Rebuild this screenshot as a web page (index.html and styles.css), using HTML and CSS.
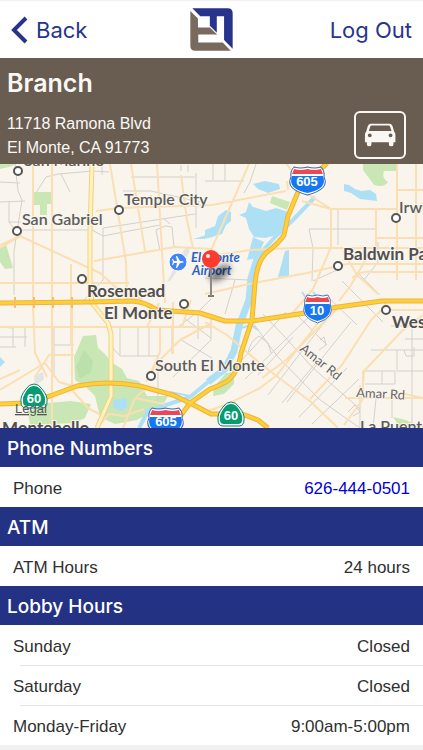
FILE: index.html
```html
<!DOCTYPE html>
<html lang="en">
    <head>
        <meta charset="utf-8">
        <meta name="viewport" content="width=device-width, initial-scale=1">
        <title>Branch</title>
        <link rel="stylesheet" href="styles.css">
    </head>
    <body>
        <header class="topbar">
            <a class="back" href="#">
                <svg class="chevron" viewBox="0 0 17 28" aria-hidden="true"><path d="M15 2 L3 14 L15 26"/></svg>
                Back
            </a>
            <svg class="logo" viewBox="30 23 130 130" role="img" aria-label="Bank logo">
                <path fill="#27348b" d="M37 24H144Q159 24 159 39V146L133 120V48H111V98L90 77V48H61Z"/>
                <path fill="#786b5e" d="M31 32L54 55V82H90L112 103H55V127H129L153 152H46Q31 152 31 137Z"/>
            </svg>
            <a class="logout" href="#">Log Out</a>
        </header>

        <section class="branch">
            <div>
                <h1>Branch</h1>
                <address>11718 Ramona Blvd<br>El Monte, CA 91773</address>
            </div>
            <button class="directions" type="button" aria-label="Directions">
                <svg viewBox="56 54 97 74" aria-hidden="true">
                    <path fill-rule="evenodd" d="M76 56H134Q140 56 143 63L148 80Q152 84 152 90V113H146V120Q146 126 139 126Q132 126 132 120V113H78V120Q78 126 71 126Q64 126 64 120V113H58V90Q58 84 62 80L67 63Q70 56 76 56ZM79 62Q75 62 74 66L70 79H140L136 66Q135 62 131 62ZM73 86A6 6 0 1 0 73 98A6 6 0 1 0 73 86ZM137 86A6 6 0 1 0 137 98A6 6 0 1 0 137 86Z"/>
                </svg>
            </button>
        </section>

        <svg class="map" viewBox="0 164 423 264" role="group" aria-label="Map of El Monte">
            <defs>
                <symbol id="interstate" viewBox="0 0 36 30" preserveAspectRatio="none">
                    <path d="M5 1Q11 3 18 1Q25 3 31 1Q35 5 34 11Q40 23 18 29Q-4 23 2 11Q1 5 5 1Z" fill="#fff" stroke="#3d68ad"/>
                    <path d="M5 3Q11 5 18 3Q25 5 31 3L33 8H3Z" fill="#ed4655"/>
                    <path d="M3 10H33Q38 23 18 27Q-2 23 3 10Z" fill="#1677f3"/>
                </symbol>
                <symbol id="stateroute" viewBox="0 0 28 26">
                    <path d="M14 1Q19 1 22 6Q28 13 27 19Q27 25 22 25H6Q1 25 1 19Q0 13 6 6Q9 1 14 1Z" fill="#fff" stroke="#078663"/>
                    <path d="M14 3Q18 3 21 7Q26 14 25 19Q25 23 21 23H7Q3 23 3 19Q2 14 7 7Q10 3 14 3Z" fill="#079b72"/>
                </symbol>
                <filter id="soft" x="-100%" y="-100%" width="300%" height="300%"><feGaussianBlur stdDeviation="3"/></filter>
            </defs>

            <rect class="land" x="0" y="164" width="423" height="264"/>

            <g class="park">
                <path d="M34 192H52V204H47V215H40V205H34Z"/>
                <path d="M0 248L6 244L13 268L5 269L0 262Z"/>
                <path d="M0 164H17Q8 168 0 169Z"/>
                <path d="M363 164H396V171H384Q381 178 388 182Q384 188 374 185Q369 178 363 170Z"/>
                <path d="M272 196L290 202L287 210L270 203Z"/>
                <path d="M83 336L96 335L98 348L105 354L111 362L122 369L127 378L139 381L147 396L168 396L163 405L137 420L115 424L100 417L95 396L86 387L75 380L74 357Z"/>
                <path d="M47 403L71 401L91 404L85 418L75 423L30 425L28 412Z"/>
                <path d="M214 387L226 373H234L234 384L224 394L213 396Z"/>
                <path d="M393 417L406 420L422 428H400Z"/>
            </g>
            <path class="parkdark" d="M84 350L93 361L91 372L80 379L76 367Z"/>
            <path class="runway" d="M167 282L184 250L190 246L189 253L171 280ZM34 376L43 372L44 379L35 386Z"/>

            <g class="water">
                <path d="M253 184L265 181L279 184L280 189L268 193L258 189Z"/>
                <path d="M344 184L349 185L355 189L361 191L370 190L376 194L377 201L360 199L351 193L344 191Z"/>
                <path d="M249 202L253 207L260 209L266 211L276 208L288 212L283 228L273 236L265 238L254 237L249 229L246 218L239 215L246 212Z"/>
                <path d="M226 210L231 212V221L226 225L222 234L212 237L205 236V230L215 226L218 216Z"/>
                <path d="M193 239L213 233V237L204 239Z"/>
                <path d="M253 237L264 242L257 258L247 260Z"/>
                <path d="M285 251L289 250V276L278 277Z"/>
                <path d="M113 400L126 398L128 407L120 411L114 408Z"/>
                <path d="M0 357L5 362L0 367Z"/>
            </g>
            <path class="river" d="M258 256L251 278L249 300L239 326L234 351L225 369L208 382"/>
            <path class="creek" d="M315 197L292 221L275 237L258 256M208 382L190 397L169 404L148 411L139 428"/>
            <path class="stream" d="M302 292L306 298M313 292L318 298M241 328L251 325L258 330M190 396L170 392"/>

            <g class="street">
                <path d="M15 164L18 191L22 200L14 251V295M0 182L20 183M0 202L25 201M9 201V222L15 230M9 222H21M16 230H90V284M36 193L46 177L58 174L93 171M61 174L70 192M92 171L109 172M84 300L103 280V228L195 214M102 164V175M92 230L103 236L160 225M156 230L165 226L172 227L174 247M163 218L170 224M196 173V228M123 191H151L200 202M131 177H195M181 165V171M188 165V172M156 230L160 251"/>
                <path d="M256 164L250 182L244 193M205 181H244M213 164V180M225 164V181M309 229H376M338 210V245M309 229L313 248L312 281M376 229V254M205 278L249 280M235 280L225 314M313 281L339 269M364 280L378 262V242M357 272L380 295"/>
                <path d="M0 327L13 328V347M0 347H16M25 328V347M33 287V311M54 328V377M54 345H74M0 337H27M110 345L120 356H158V402M120 327V355M138 327V356M149 327V356M172 325V354M184 318L211 338M178 327L199 311L211 299M211 318V340L173 377M198 313V339M181 340L212 358"/>
                <path d="M250 319L277 356L319 399L347 419L360 428M263 314L283 335L313 368L360 409M294 312L327 345M325 294L357 325M342 281L383 322M351 322L287 402M333 311L268 395M315 311L245 379M286 312L229 374M248 353Q250 341 259 336L268 343L271 353M258 375L293 337M282 403L315 364M299 417L347 368M312 424L359 379M320 340L324 337L326 345L319 350M348 412L355 405L360 412L353 416M360 427V385M376 399L373 428M392 397V418M365 371H395V384H365M382 371V384M371 350H423M397 350V371H423M404 350L406 356H414V347M405 339H423M391 326H423M412 327V428"/>
            </g>

            <g class="road">
                <path d="M33 164V306L35 354M52 164V428M0 283H129M71 264V345M110 164L126 262L127 304M131 164L145 251M157 164L165 303M181 175L187 220L193 248M0 245L20 236L100 273L120 291L142 299M19 237L0 248M94 261L175 247L212 249M96 211L119 208L212 205L286 191M249 164L224 221L205 264M151 195V205M0 327H212M0 390L45 363L59 382L76 387M35 353L47 377M35 377L49 355H74M72 302V390M72 390L88 408L101 415M0 379L20 370M147 327L159 303M160 327V352L148 379M173 302V354M182 327L191 300M146 382L156 364L180 340L212 323"/>
                <path d="M286 163L309 195L331 209H397M331 209V247L313 289L291 315M205 257L250 250L294 248H423M205 294L249 284L307 273L347 264H423M397 164V280M376 210V250M416 164V280M376 238H423M397 190H423M397 190V164M331 209L302 201M287 181L288 190M205 322L227 335L262 365L311 402L338 428M205 412L228 404L260 388L277 375L311 332L331 306M262 378L286 360L337 309M310 399L342 365L371 320L386 306M345 398H423M363 385L364 371L402 331L423 315M363 371V399L344 425M383 301L390 310L423 310M352 278Q361 270 374 272H423M343 251L357 275L378 294M365 261L351 285L339 301M423 398L391 391M123 428L135 398L165 404M136 397L147 388M97 428L109 414L124 416L144 409"/>
            </g>

            <path class="rosemead-edge" d="M92 164L90 230V285L92 303L108 323L111 334V396L97 428"/>
            <path class="rosemead" d="M92 164L90 230V285L92 303L108 323L111 334V396L97 428"/>

            <g class="freeway-edge">
                <path d="M0 303L90 302L133 301Q145 302 157 310L200 313L225 321H252L305 313L338 307L382 301H423"/>
                <path d="M327 163L298 192L288 216L284 235Q280 242 266 253Q257 262 255 283L252 320L241 353Q238 374 226 382Q216 387 210 389L190 403L176 422V428"/>
                <path d="M0 404L25 403L50 396L77 386Q108 380 140 386L173 395L190 403L211 414H242L258 420L268 428"/>
            </g>
            <g class="freeway">
                <path d="M0 303L90 302L133 301Q145 302 157 310L200 313L225 321H252L305 313L338 307L382 301H423"/>
                <path d="M327 163L298 192L288 216L284 235Q280 242 266 253Q257 262 255 283L252 320L241 353Q238 374 226 382Q216 387 210 389L190 403L176 422V428"/>
                <path d="M0 404L25 403L50 396L77 386Q108 380 140 386L173 395L190 403L211 414H242L258 420L268 428"/>
            </g>
            <path class="ramp" d="M15 297V308M34 297V308M53 297V308M72 297V308"/>

            <g class="town">
                <circle cx="18" cy="171" r="4"/>
                <circle cx="17" cy="231" r="4"/>
                <circle cx="119" cy="210" r="4"/>
                <circle cx="82" cy="279" r="4"/>
                <circle cx="184" cy="304" r="4"/>
                <circle cx="151" cy="376" r="4"/>
                <circle cx="396" cy="218" r="4"/>
                <circle cx="338" cy="266" r="4"/>
                <circle cx="386" cy="310" r="4"/>
            </g>

            <g class="place">
                <text x="24" y="166">San Marino</text>
                <text x="124" y="205">Temple City</text>
                <text x="22" y="225">San Gabriel</text>
                <text x="399" y="213">Irwindale</text>
                <text x="155" y="371">South El Monte</text>
                <text x="360" y="432">La Puente</text>
            </g>
            <g class="place big">
                <text x="87" y="297">Rosemead</text>
                <text x="104" y="319">El Monte</text>
                <text x="343" y="260">Baldwin Park</text>
                <text x="392" y="328">West Covina</text>
                <text x="2" y="434">Montebello</text>
            </g>
            <g class="roadname">
                <text transform="translate(299 350) rotate(39)">Amar Rd</text>
                <text transform="translate(356 397) rotate(3)">Amar Rd</text>
            </g>

            <circle cx="178" cy="262" r="9" fill="#4385f4" stroke="#fff"/>
            <path fill="#fff" transform="translate(178 262) rotate(90)" d="M0 -6Q1 -5 1 -2L6 1V2L1 1L1 4L3 5V6L0 5L-3 6V5L-1 4V1L-6 2V1L-1 -2Q-1 -5 0 -6Z"/>
            <g class="airport">
                <text x="191" y="262">El Monte</text>
                <text x="192" y="275">Airport</text>
            </g>

            <use href="#interstate" x="289" y="166" width="37" height="30"/>
            <use href="#interstate" x="303" y="294" width="29" height="30"/>
            <use href="#interstate" x="147" y="407" width="37" height="30"/>
            <use href="#stateroute" x="20" y="383" width="28" height="26"/>
            <use href="#stateroute" x="217" y="401" width="28" height="26"/>
            <g class="shield">
                <text x="307" y="186">605</text>
                <text x="317" y="315">10</text>
                <text x="166" y="426">605</text>
                <text x="34" y="403">60</text>
                <text x="231" y="420">60</text>
            </g>

            <ellipse cx="220" cy="273" rx="12" ry="6" fill="#000" opacity=".5" filter="url(#soft)" transform="rotate(-35 220 273)"/>
            <path class="needle-base" d="M208 296H214"/>
            <path class="needle" d="M211 266V296"/>
            <circle cx="211" cy="259" r="9" fill="#fb3b30"/>
            <circle cx="208" cy="256" r="2" fill="#fff" opacity=".9"/>

            <a href="#"><text class="legal" x="15" y="413">Legal</text></a>
        </svg>

        <main>
            <h2>Phone Numbers</h2>
            <dl>
                <div class="row"><dt>Phone</dt><dd><a href="tel:626-444-0501">626-444-0501</a></dd></div>
            </dl>
            <h2>ATM</h2>
            <dl>
                <div class="row"><dt>ATM Hours</dt><dd>24 hours</dd></div>
            </dl>
            <h2>Lobby Hours</h2>
            <dl>
                <div class="row"><dt>Sunday</dt><dd>Closed</dd></div>
                <div class="row"><dt>Saturday</dt><dd>Closed</dd></div>
                <div class="row"><dt>Monday-Friday</dt><dd>9:00am-5:00pm</dd></div>
            </dl>
        </main>
    </body>
</html>
```
FILE: styles.css
```css
*{
    box-sizing: border-box;
}
body{
    margin: 0;
    background: #f1f1f2;
    color: #303030;
    font-family: "Liberation Sans", Arial, sans-serif;
    font-size: 17px;
}
.topbar{
    display: grid;
    grid-template-columns: 1fr auto 1fr;
    align-items: center;
    height: 58px;
    padding: 0 11px;
    border-top: 1px solid #f1f1f2;
    background: white;
}
.topbar a{
    color: #27348b;
    font-family: Inter, sans-serif;
    font-size: 22px;
    line-height: 28px;
    text-decoration: none;
}
.back{
    display: flex;
    align-items: center;
    gap: 8px;
}
.chevron{
    width: 17px;
    height: 28px;
    fill: none;
    stroke: #27348b;
    stroke-width: 4;
}
.logo{
    width: 43px;
    height: 43px;
}
.logout{
    justify-self: end;
}
.branch{
    display: flex;
    justify-content: space-between;
    align-items: flex-end;
    padding: 8px 17px 5px 7px;
    background: #695c50;
    color: #faf8f5;
}
h1{
    margin: 0 0 11px;
    font-family: Inter, sans-serif;
    font-size: 25px;
    font-weight: 600;
    line-height: 34px;
}
address{
    padding-top: 1px;
    font-size: 16px;
    font-style: normal;
    line-height: 24px;
    margin-bottom: -1px;
}
.directions{
    display: flex;
    align-items: center;
    justify-content: center;
    width: 52px;
    height: 48px;
    padding: 0;
    border: 2px solid #faf8f5;
    border-radius: 6px;
    background: none;
    cursor: pointer;
}
.directions svg{
    width: 32px;
    height: 24px;
    fill: #faf8f5;
}

/* map */
.map{
    display: block;
    width: 100%;
    overflow: hidden;
    font-family: Lato, sans-serif;
}
.map path{
    stroke-linejoin: round;
}
.land{
    fill: #f9f5ed;
}
.park{
    fill: #c9e7b5;
}
.parkdark{
    fill: #bce0aa;
}
.runway{
    fill: #e2e3e3;
}
.water{
    fill: #aee0f5;
}
.river, .creek, .stream, .street, .road, .rosemead, .rosemead-edge, .freeway, .freeway-edge, .ramp, .needle, .needle-base{
    fill: none;
}
.river{
    stroke: #aee0f5;
    stroke-width: 7;
}
.creek{
    stroke: #aee0f5;
    stroke-width: 4;
}
.stream{
    stroke: #aee0f5;
    stroke-width: 2;
}
.street{
    stroke: #d3d1cd;
    stroke-width: 1;
}
.road{
    stroke: #fbdfb3;
    stroke-width: 2;
}
.rosemead-edge{
    stroke: #f3d08a;
    stroke-width: 5;
}
.rosemead{
    stroke: #fff3ba;
    stroke-width: 3;
}
.freeway-edge{
    stroke: #eeb148;
    stroke-width: 5;
}
.freeway{
    stroke: #fdd033;
    stroke-width: 3;
}
.ramp{
    stroke: #f6bd65;
    stroke-width: 2;
}
.town{
    fill: white;
    stroke: #555;
    stroke-width: 2;
}
.place, .roadname, .airport{
    stroke: #f9f5ed;
    stroke-width: 2;
    paint-order: stroke;
    stroke-linejoin: round;
}
.place{
    fill: #5c5c5c;
    font-size: 16px;
    font-weight: 600;
}
.big{
    fill: #505050;
    font-size: 17px;
    font-weight: 700;
}
.roadname{
    fill: #666;
    font-size: 13px;
}
.airport{
    fill: #2d63c0;
    font-size: 13px;
    font-style: italic;
    font-weight: 700;
}
.shield{
    fill: white;
    font-family: "Liberation Sans", Arial, sans-serif;
    font-size: 13px;
    font-weight: 700;
    text-anchor: middle;
}
.needle{
    stroke: #8a8a8a;
    stroke-width: 2;
}
.needle-base{
    stroke: #777;
    stroke-width: 2;
}
.legal{
    fill: #555;
    font-family: "Liberation Sans", Arial, sans-serif;
    font-size: 13px;
    text-decoration: underline;
}

/* details */
h2{
    margin: 0;
    padding: 2px 7px 0;
    background: #243284;
    color: white;
    font-family: Inter, sans-serif;
    font-size: 19px;
    font-weight: 500;
    line-height: 37px;
}
dl{
    margin: 0;
    background: white;
}
.row{
    display: flex;
    justify-content: space-between;
    padding: 3px 13px 0;
    line-height: 37px;
}
.row + .row{
    background: linear-gradient(#e4e4e4, #e4e4e4) 20px 0 / 100% 1px no-repeat;
}
dd{
    margin: 0;
}
dd a{
    color: #0000d6;
    text-decoration: none;
}
```
